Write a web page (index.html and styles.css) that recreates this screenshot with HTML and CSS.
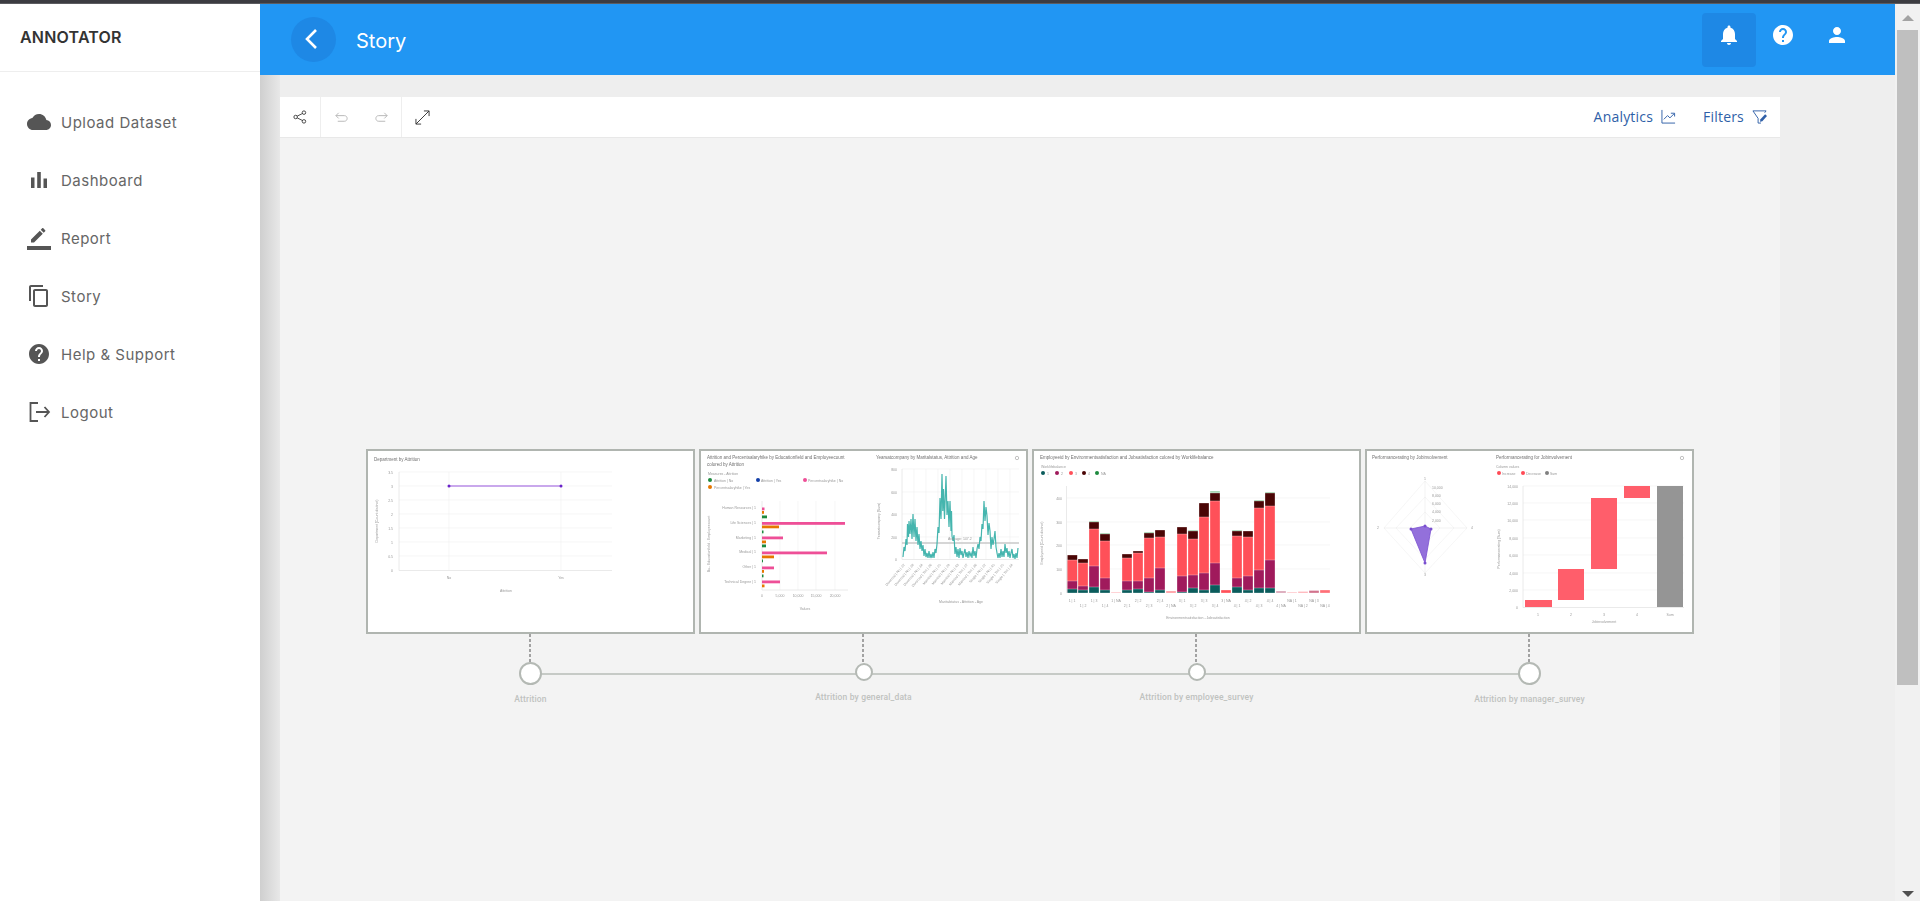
FILE: index.html
```html
<!DOCTYPE html>
<html>
<head>
<meta charset="utf-8">
<title>Annotator - Story</title>
<link rel="stylesheet" href="styles.css">
</head>
<body>
<div class="topstrip"></div>
<div class="app">
  <aside class="sidebar">
    <div class="brand">ANNOTATOR</div>
    <nav class="menu">
      <a class="menu-item"><svg viewBox="0 0 24 24"><path d="M19.35 10.04C18.67 6.59 15.64 4 12 4 9.11 4 6.6 5.64 5.35 8.04 2.34 8.36 0 10.91 0 14c0 3.31 2.69 6 6 6h13c2.76 0 5-2.24 5-5 0-2.64-2.05-4.78-4.65-4.96z"/></svg>Upload Dataset</a>
      <a class="menu-item"><svg viewBox="0 0 24 24"><path d="M4 9.500h3.500V20H4zM10.200 4h3.600v16h-3.600zM16.500 10.500H20V20h-3.500z"/></svg>Dashboard</a>
      <a class="menu-item"><svg viewBox="0 0 24 24"><path d="M0 20h24v4H0zM4 13.500v3h3l8.800-8.800-3-3zM18.200 5.300c.3-.3.3-.8 0-1.100l-1.900-1.900c-.3-.3-.8-.3-1.100 0l-1.500 1.500 3 3z"/></svg>Report</a>
      <a class="menu-item"><svg viewBox="0 0 24 24"><path d="M16 1H4c-1.100 0-2 .9-2 2v14h2V3h12V1zm3 4H8c-1.100 0-2 .9-2 2v14c0 1.100.9 2 2 2h11c1.100 0 2-.9 2-2V7c0-1.100-.9-2-2-2zm0 16H8V7h11v14z"/></svg>Story</a>
      <a class="menu-item"><svg viewBox="0 0 24 24"><path d="M12 2C6.480 2 2 6.480 2 12s4.480 10 10 10 10-4.480 10-10S17.520 2 12 2zm1 17h-2v-2h2v2zm2.070-7.750l-.9.920C13.450 12.900 13 13.500 13 15h-2v-.5c0-1.100.45-2.100 1.170-2.830l1.240-1.260c.37-.36.59-.86.59-1.410 0-1.100-.9-2-2-2s-2 .9-2 2H8c0-2.210 1.790-4 4-4s4 1.790 4 4c0 .88-.36 1.680-.93 2.250z"/></svg>Help &amp; Support</a>
      <a class="menu-item"><svg viewBox="0 0 24 24" class="stroke"><path d="M11 3H3.500v18H11M9 12h13M17.500 7l4.500 5-4.500 5"/></svg>Logout</a>
    </nav>
  </aside>

  <div class="main">
    <header class="topbar">
      <button class="back"><svg viewBox="0 0 24 24"><path d="M16 3L7 12l9 9"/></svg></button>
      <h1 class="page-title">Story</h1>
      <div class="top-icons">
        <span class="top-icon active"><svg viewBox="0 0 24 24"><path d="M12 22c1.100 0 2-.9 2-2h-4c0 1.100.9 2 2 2zm6-6v-5c0-3.070-1.630-5.640-4.500-6.320V4c0-.83-.67-1.500-1.500-1.500s-1.500.67-1.500 1.500v.68C7.640 5.360 6 7.920 6 11v5l-2 2v1h16v-1l-2-2z"/></svg></span>
        <span class="top-icon"><svg viewBox="0 0 24 24"><path d="M12 2C6.480 2 2 6.480 2 12s4.480 10 10 10 10-4.480 10-10S17.520 2 12 2zm1 17h-2v-2h2v2zm2.070-7.750l-.9.920C13.450 12.900 13 13.500 13 15h-2v-.5c0-1.100.45-2.100 1.170-2.830l1.240-1.260c.37-.36.59-.86.59-1.410 0-1.100-.9-2-2-2s-2 .9-2 2H8c0-2.210 1.790-4 4-4s4 1.790 4 4c0 .88-.36 1.680-.93 2.250z"/></svg></span>
        <span class="top-icon"><svg viewBox="0 0 24 24"><path d="M12 12c2.210 0 4-1.790 4-4s-1.790-4-4-4-4 1.790-4 4 1.790 4 4 4zm0 2c-2.670 0-8 1.340-8 4v2h16v-2c0-2.660-5.330-4-8-4z"/></svg></span>
      </div>
    </header>

    <section class="content">
      <div class="panel">
        <div class="toolbar">
          <span class="tool"><svg class="small" viewBox="0 0 16 16"><circle cx="3" cy="8" r="2"/><circle cx="12.500" cy="3" r="2"/><circle cx="12.500" cy="13" r="2"/><path d="M4.800 7l6-3M4.800 9l6 3"/></svg></span>
          <span class="tool wide">
            <svg class="faint" viewBox="0 0 16 16"><path d="M5 3L2 6l3 3M2 6h9c4 0 4 6 0 6H4"/></svg>
            <svg class="faint" viewBox="0 0 16 16"><path d="M11 3l3 3-3 3M14 6H5c-4 0-4 6 0 6h7"/></svg>
          </span>
          <span class="tool"><svg viewBox="0 0 16 16"><path d="M1 15L15 1M9.500 1H15v5.500M1 9.500V15h5.500"/></svg></span>
          <div class="toolbar-right">
            <a class="tool-link">Analytics <svg viewBox="0 0 16 16"><path d="M1 1v14h14M3 11l4-4 2.500 2.500L14 5M10.500 4.500H14.500V8"/></svg></a>
            <a class="tool-link">Filters <svg viewBox="0 0 16 16"><path d="M6.500 10L1 2h14l-1.500 2M6.500 10v5h3"/><path class="solid" d="M8.500 13.500l.5-2.500 5-5.500 2 2-5 5.500z"/></svg></a>
          </div>
        </div>

        <div class="canvas">
          <div class="story">

            <div class="step big first">
              <div class="card">
                <svg class="thumb" viewBox="0 0 325 181">
                  <text x="6" y="10" class="title">Department by Attrition</text>
                  <path class="grid" d="M31 21H244M31 35H244M31 49H244M31 63H244M31 77H244M31 91H244M31 105H244M81 21V119M193 21V119"/>
                  <path class="axis" d="M31 21V119.500H244"/>
                  <g class="tick">
                    <text x="25" y="22.500" text-anchor="end">3.5</text><text x="25" y="36.500" text-anchor="end">3</text>
                    <text x="25" y="50.500" text-anchor="end">2.5</text><text x="25" y="64.500" text-anchor="end">2</text>
                    <text x="25" y="78.500" text-anchor="end">1.5</text><text x="25" y="92.500" text-anchor="end">1</text>
                    <text x="25" y="106.500" text-anchor="end">0.5</text><text x="25" y="120.500" text-anchor="end">0</text>
                    <text x="81" y="128" text-anchor="middle">No</text><text x="193" y="128" text-anchor="middle">Yes</text>
                    <text x="138" y="141" text-anchor="middle">Attrition</text>
                    <text transform="translate(10,70) rotate(-90)" text-anchor="middle">Department (Count distinct)</text>
                  </g>
                  <path d="M81 35H193" stroke="#c9a8ec" stroke-width="2"/>
                  <circle cx="81" cy="35" r="1.500" fill="#6a22c9"/><circle cx="193" cy="35" r="1.500" fill="#6a22c9"/>
                </svg>
              </div>
              <div class="link"></div><div class="dot"></div>
              <div class="step-label">Attrition</div>
            </div>

            <div class="step">
              <div class="card">
                <svg class="thumb" viewBox="2 2 325 181">
                  <text x="8" y="10" class="title">Attrition and Percentsalaryhike by Educationfield and Employeecount</text>
                  <text x="8" y="17" class="title">colored by Attrition</text>
                  <text x="9" y="26" class="tick">Measures - Attrition</text>
                  <g class="tick">
                    <circle cx="11" cy="31" r="2" fill="#1d8a3e"/><text x="15" y="32.500">Attrition | No</text>
                    <circle cx="59" cy="31" r="2" fill="#123fa8"/><text x="62" y="32.500">Attrition | Yes</text>
                    <circle cx="106" cy="31" r="2" fill="#ee4f97"/><text x="109" y="32.500">Percentsalaryhike | No</text>
                    <circle cx="11" cy="38" r="2" fill="#e67700"/><text x="15" y="39.500">Percentsalaryhike | Yes</text>
                  </g>
                  <path class="grid" d="M81 52V141M99 52V141M117 52V141M136 52V141"/>
                  <path class="axis" d="M63 52V141H149"/>
                  <g class="tick">
                    <text x="57" y="59.500" text-anchor="end">Human Resources | 1</text><text x="57" y="74.500" text-anchor="end">Life Sciences | 1</text>
                    <text x="57" y="89.500" text-anchor="end">Marketing | 1</text><text x="57" y="103.500" text-anchor="end">Medical | 1</text>
                    <text x="57" y="118.500" text-anchor="end">Other | 1</text><text x="57" y="133.500" text-anchor="end">Technical Degree | 1</text>
                    <text x="63" y="147.500" text-anchor="middle">0</text><text x="81" y="147.500" text-anchor="middle">5,000</text>
                    <text x="99" y="147.500" text-anchor="middle">10,000</text><text x="117" y="147.500" text-anchor="middle">15,000</text>
                    <text x="136" y="147.500" text-anchor="middle">20,000</text><text x="106" y="160.500" text-anchor="middle">Values</text>
                    <text transform="translate(11,95) rotate(-90)" text-anchor="middle">Bu.. Educationfield - Employeecount</text>
                  </g>
                  <g fill="#ee4f97">
                    <rect x="63" y="58.500" width="2.500" height="2.800"/><rect x="63" y="73" width="83" height="2.800"/>
                    <rect x="63" y="87.500" width="21" height="2.800"/><rect x="63" y="102.500" width="65" height="2.800"/>
                    <rect x="63" y="117.500" width="12" height="2.800"/><rect x="63" y="131.500" width="18" height="2.800"/>
                  </g>
                  <g fill="#e67700">
                    <rect x="63" y="62" width="2" height="2.800"/><rect x="63" y="76.500" width="17" height="2.800"/>
                    <rect x="63" y="91.500" width="4" height="2.800"/><rect x="63" y="106.500" width="12" height="2.800"/>
                    <rect x="63" y="121" width="2" height="2.800"/><rect x="63" y="135.500" width="2.500" height="2.800"/>
                  </g>
                  <g fill="#1d8a3e">
                    <rect x="63" y="66.500" width="5" height="2.800"/><rect x="63" y="81.500" width="1.500" height="2.800"/>
                    <rect x="63" y="95.500" width="4" height="2.800"/><rect x="63" y="110.500" width="1" height="2.800"/><rect x="63" y="125.500" width="1.500" height="2.800"/>
                  </g>
                  <path class="grid" d="M203 20H320M203 43H320M203 65H320M203 88H320M215 20V110M227 20V110M239 20V110M251 20V110M263 20V110M275 20V110M287 20V110M299 20V110M311 20V110"/>
                  <path class="axis" d="M203 20V110.500H320"/>
                  <text x="177" y="10" class="title">Yearsatcompany by Maritalstatus, Attrition and Age</text>
                  <circle cx="318" cy="9" r="1.700" fill="none" stroke="#888" stroke-width=".5"/>
                  <path d="M203 94H320" stroke="#c8c8c8" stroke-width="1.500"/>
                  <path class="teal" d="M204 108L205 98 206 102 207 90 208 96 208.500 75 209.500 88 210 72 211 85 212 70 213 90 214 65 215 88 216 70 217 92 218 78 219 96 220 85 221 100 222 92 223 102 224 96 225 107 226 100 227 108 228 104 229 109 230 102 231 109 232 105 233 109 234 103 235 109 236 100 237 104 238 95 239 78 240 84 241 49 242 70 243 25 243.800 62 244.500 40 245.500 70 247 27 248 66 249 52 250 78 251 52 252 82 252.500 62 253 87 254 92 255 86 256 105 257 98 258 108 259 100 260 109 261 99 262 106 263 102 264 109 265 104 266 100 267 108 268 103 269 109 270 102 271 107 272 104 273 109 274 98 275 107 276 102 277 109 278 100 279 95 280 100 281 88 282 92 283 75 284 80 285 52 286 72 287 58 288 67 289 86 290 74 291 82 292 100 293 88 294 96 295 90 296 82 297 98 298 104 299 109 300 104 301 109 302 100 303 108 304 102 305 108 306 95 307 104 308 99 309 108 310 102 311 109 312 104 313 100 314 109 315 105 316 110 317 104 318 109 319 99"/>
                  <g class="tick">
                    <text x="198" y="21.500" text-anchor="end">800</text><text x="198" y="44.500" text-anchor="end">600</text>
                    <text x="198" y="66.500" text-anchor="end">400</text><text x="198" y="89.500" text-anchor="end">200</text><text x="198" y="111.500" text-anchor="end">0</text>
                    <text x="249" y="90.500">Average: 147.2</text>
                    <text x="262" y="153.500" text-anchor="middle">Maritalstatus - Attrition - Age</text>
                    <text transform="translate(181,72) rotate(-90)" text-anchor="middle">Yearsatcompany (Sum)</text>
                    <text transform="translate(206,116) rotate(-50)" text-anchor="end">Divorced | No | 22</text>
                    <text transform="translate(215,116) rotate(-50)" text-anchor="end">Divorced | No | 28</text>
                    <text transform="translate(224,116) rotate(-50)" text-anchor="end">Divorced | No | 34</text>
                    <text transform="translate(233,116) rotate(-50)" text-anchor="end">Divorced | Yes | 26</text>
                    <text transform="translate(242,116) rotate(-50)" text-anchor="end">Married | No | 20</text>
                    <text transform="translate(251,116) rotate(-50)" text-anchor="end">Married | No | 29</text>
                    <text transform="translate(260,116) rotate(-50)" text-anchor="end">Married | No | 43</text>
                    <text transform="translate(269,116) rotate(-50)" text-anchor="end">Married | Yes | 27</text>
                    <text transform="translate(278,116) rotate(-50)" text-anchor="end">Married | Yes | 36</text>
                    <text transform="translate(287,116) rotate(-50)" text-anchor="end">Single | No | 22</text>
                    <text transform="translate(296,116) rotate(-50)" text-anchor="end">Single | No | 40</text>
                    <text transform="translate(305,116) rotate(-50)" text-anchor="end">Single | Yes | 20</text>
                    <text transform="translate(314,116) rotate(-50)" text-anchor="end">Single | Yes | 34</text>
                  </g>
                </svg>
              </div>
              <div class="link"></div><div class="dot"></div>
              <div class="step-label">Attrition by general_data</div>
            </div>

            <div class="step">
              <div class="card">
                <svg class="thumb" viewBox="2 2 325 181">
                  <text x="8" y="10" class="title">Employeeid by Environmentsatisfaction and Jobsatisfaction colored by Worklifebalance</text>
                  <text x="9" y="19" class="tick">Worklifebalance</text>
                  <g class="tick">
                    <circle cx="11" cy="24" r="2" fill="#0b5c5c"/><text x="15" y="25.500">1</text>
                    <circle cx="25" cy="24" r="2" fill="#a01a5c"/><text x="29" y="25.500">2</text>
                    <circle cx="39" cy="24" r="2" fill="#ff5059"/><text x="43" y="25.500">3</text>
                    <circle cx="52" cy="24" r="2" fill="#4a0505"/><text x="56" y="25.500">4</text>
                    <circle cx="65" cy="24" r="2" fill="#1d8a3e"/><text x="69" y="25.500">NA</text>
                  </g>
                  <path class="grid" d="M35 49H298M35 73H298M35 96H298M35 120H298"/>
                  <path class="axis" d="M34.500 37V144"/>
                  <g class="tick">
                    <text x="30" y="50.500" text-anchor="end">400</text><text x="30" y="74.500" text-anchor="end">300</text>
                    <text x="30" y="97.500" text-anchor="end">200</text><text x="30" y="121.500" text-anchor="end">100</text><text x="30" y="145.500" text-anchor="end">0</text>
                    <text x="166" y="170" text-anchor="middle">Environmentsatisfaction - Jobsatisfaction</text>
                    <text transform="translate(11,94) rotate(-90)" text-anchor="middle">Employeeid (Count distinct)</text>
                  </g>
                  <g class="bars">
                    <rect x="35.300" y="106" width="10" height="38" fill="#4a0505"/><rect x="35.300" y="111" width="10" height="33" fill="#ff5059"/><rect x="35.300" y="132" width="10" height="12" fill="#a01a5c"/><rect x="35.300" y="140" width="10" height="4" fill="#0b5c5c"/>
                    <rect x="46" y="110" width="10" height="34" fill="#4a0505"/><rect x="46" y="114" width="10" height="30" fill="#ff5059"/><rect x="46" y="137" width="10" height="7" fill="#a01a5c"/><rect x="46" y="141" width="10" height="3" fill="#0b5c5c"/>
                    <rect x="57" y="72" width="10" height="1.500" fill="#9ccfa8"/><rect x="57" y="73" width="10" height="71" fill="#4a0505"/><rect x="57" y="80" width="10" height="64" fill="#ff5059"/><rect x="57" y="117" width="10" height="27" fill="#a01a5c"/><rect x="57" y="138" width="10" height="6" fill="#0b5c5c"/>
                    <rect x="68" y="84" width="10" height="1.500" fill="#9ccfa8"/><rect x="68" y="85" width="10" height="59" fill="#4a0505"/><rect x="68" y="92" width="10" height="52" fill="#ff5059"/><rect x="68" y="129" width="10" height="15" fill="#a01a5c"/><rect x="68" y="141" width="10" height="3" fill="#0b5c5c"/>
                    <rect x="79" y="143" width="10" height="1" fill="#ffc0c4"/>
                    <rect x="90" y="105" width="10" height="39" fill="#4a0505"/><rect x="90" y="109" width="10" height="35" fill="#ff5059"/><rect x="90" y="132" width="10" height="12" fill="#a01a5c"/><rect x="90" y="141" width="10" height="3" fill="#0b5c5c"/>
                    <rect x="101" y="102" width="10" height="42" fill="#4a0505"/><rect x="101" y="104" width="10" height="40" fill="#ff5059"/><rect x="101" y="132" width="10" height="12" fill="#a01a5c"/><rect x="101" y="140" width="10" height="4" fill="#0b5c5c"/>
                    <rect x="112" y="83" width="10" height="1.500" fill="#9ccfa8"/><rect x="112" y="84" width="10" height="60" fill="#4a0505"/><rect x="112" y="89" width="10" height="55" fill="#ff5059"/><rect x="112" y="129" width="10" height="15" fill="#a01a5c"/><rect x="112" y="143" width="10" height="1" fill="#0b5c5c"/>
                    <rect x="123" y="81" width="10" height="63" fill="#4a0505"/><rect x="123" y="88" width="10" height="56" fill="#ff5059"/><rect x="123" y="119" width="10" height="25" fill="#a01a5c"/><rect x="123" y="141" width="10" height="3" fill="#0b5c5c"/>
                    <rect x="134" y="142" width="10" height="2" fill="#ff9aa0"/>
                    <rect x="145" y="78" width="10" height="66" fill="#4a0505"/><rect x="145" y="85" width="10" height="59" fill="#ff5059"/><rect x="145" y="127" width="10" height="17" fill="#a01a5c"/><rect x="145" y="143" width="10" height="1" fill="#0b5c5c"/>
                    <rect x="156" y="81" width="10" height="1.500" fill="#9ccfa8"/><rect x="156" y="82" width="10" height="62" fill="#4a0505"/><rect x="156" y="90" width="10" height="54" fill="#ff5059"/><rect x="156" y="126" width="10" height="18" fill="#a01a5c"/><rect x="156" y="139" width="10" height="5" fill="#0b5c5c"/>
                    <rect x="167" y="54" width="10" height="90" fill="#4a0505"/><rect x="167" y="68" width="10" height="76" fill="#ff5059"/><rect x="167" y="124" width="10" height="20" fill="#a01a5c"/><rect x="167" y="141" width="10" height="3" fill="#0b5c5c"/>
                    <rect x="178" y="42" width="10" height="2" fill="#9ccfa8"/><rect x="178" y="44" width="10" height="100" fill="#4a0505"/><rect x="178" y="52" width="10" height="92" fill="#ff5059"/><rect x="178" y="114" width="10" height="30" fill="#a01a5c"/><rect x="178" y="136" width="10" height="8" fill="#0b5c5c"/>
                    <rect x="189" y="141" width="10" height="3" fill="#ff5059"/>
                    <rect x="200" y="81" width="10" height="1.500" fill="#9ccfa8"/><rect x="200" y="82" width="10" height="62" fill="#4a0505"/><rect x="200" y="87" width="10" height="57" fill="#ff5059"/><rect x="200" y="129" width="10" height="15" fill="#a01a5c"/><rect x="200" y="138" width="10" height="6" fill="#0b5c5c"/>
                    <rect x="211" y="82" width="10" height="62" fill="#4a0505"/><rect x="211" y="88" width="10" height="56" fill="#ff5059"/><rect x="211" y="127" width="10" height="17" fill="#a01a5c"/><rect x="211" y="141" width="10" height="3" fill="#0b5c5c"/>
                    <rect x="222" y="51" width="10" height="1.500" fill="#9ccfa8"/><rect x="222" y="52" width="10" height="92" fill="#4a0505"/><rect x="222" y="59" width="10" height="85" fill="#ff5059"/><rect x="222" y="121" width="10" height="23" fill="#a01a5c"/><rect x="222" y="139" width="10" height="5" fill="#0b5c5c"/>
                    <rect x="233" y="43" width="10" height="1.500" fill="#9ccfa8"/><rect x="233" y="44" width="10" height="100" fill="#4a0505"/><rect x="233" y="57" width="10" height="87" fill="#ff5059"/><rect x="233" y="111" width="10" height="33" fill="#a01a5c"/><rect x="233" y="139" width="10" height="5" fill="#0b5c5c"/>
                    <rect x="244" y="142" width="10" height="2" fill="#d9a3b5"/><rect x="255" y="143" width="10" height="1" fill="#ffc0c4"/><rect x="266" y="142.500" width="10" height="1.500" fill="#ffb0b5"/>
                    <rect x="277" y="141.500" width="10" height="2.500" fill="#d2738d"/><rect x="288" y="141" width="10" height="3" fill="#ff6f77"/>
                  </g>
                  <g class="tick" text-anchor="middle">
                    <text x="40" y="152.500">1 | 1</text><text x="51" y="157.500">1 | 2</text><text x="62" y="152.500">1 | 3</text><text x="73" y="157.500">1 | 4</text><text x="84" y="152.500">1 | NA</text>
                    <text x="95" y="157.500">2 | 1</text><text x="106" y="152.500">2 | 2</text><text x="117" y="157.500">2 | 3</text><text x="128" y="152.500">2 | 4</text><text x="139" y="157.500">2 | NA</text>
                    <text x="150" y="152.500">3 | 1</text><text x="161" y="157.500">3 | 2</text><text x="172" y="152.500">3 | 3</text><text x="183" y="157.500">3 | 4</text><text x="194" y="152.500">3 | NA</text>
                    <text x="205" y="157.500">4 | 1</text><text x="216" y="152.500">4 | 2</text><text x="227" y="157.500">4 | 3</text><text x="238" y="152.500">4 | 4</text><text x="249" y="157.500">4 | NA</text>
                    <text x="260" y="152.500">NA | 1</text><text x="271" y="157.500">NA | 2</text><text x="282" y="152.500">NA | 3</text><text x="293" y="157.500">NA | 4</text>
                  </g>
                </svg>
              </div>
              <div class="link"></div><div class="dot"></div>
              <div class="step-label">Attrition by employee_survey</div>
            </div>

            <div class="step big last">
              <div class="card">
                <svg class="thumb" viewBox="2 2 325 181">
                  <text x="7" y="10" class="title">Performancerating by Jobinvolvement</text>
                  <text x="131" y="10" class="title">Performancerating for Jobinvolvement</text>
                  <circle cx="317" cy="9" r="1.700" fill="none" stroke="#888" stroke-width=".5"/>
                  <path class="grid" d="M60 32L102 79 60 124 19 79zM60 48L89 79 60 110 31 79zM60 63L75 79 60 95 45 79z"/>
                  <path d="M60 32V124M19 79H102" stroke="#e0e0e0" stroke-width=".4"/>
                  <path d="M60 77L66 80 60 114 46 80z" fill="#9370db" stroke="#7a4fd0" stroke-width=".8"/>
                  <circle cx="60" cy="77" r="1.500" fill="#7a4fd0"/><circle cx="66" cy="80" r="1.500" fill="#7a4fd0"/><circle cx="60" cy="114" r="1.500" fill="#7a4fd0"/><circle cx="46" cy="80" r="1.500" fill="#7a4fd0"/>
                  <g class="tick">
                    <text x="67" y="40">10,000</text><text x="67" y="48">8,000</text><text x="67" y="56">6,000</text><text x="67" y="64">4,000</text><text x="67" y="73">2,000</text>
                    <text x="60" y="31" text-anchor="middle">1</text><text x="13" y="80" text-anchor="middle">2</text><text x="107" y="80" text-anchor="middle">4</text><text x="60" y="127" text-anchor="middle">3</text>
                    <text x="131" y="19">Column values</text>
                    <circle cx="134" cy="24" r="2" fill="#ff4a55"/><text x="137" y="25.500">Increase</text>
                    <circle cx="158" cy="24" r="2" fill="#ff4a55"/><text x="161" y="25.500">Decrease</text>
                    <circle cx="182" cy="24" r="2" fill="#808080"/><text x="185" y="25.500">Sum</text>
                  </g>
                  <path class="grid" d="M158 37H319M158 54H319M158 71H319M158 89H319M158 106H319M158 124H319M158 141H319"/>
                  <path class="axis" d="M158 37V158.500H319"/>
                  <g class="tick">
                    <text x="153" y="38.500" text-anchor="end">14,000</text><text x="153" y="55.500" text-anchor="end">12,000</text>
                    <text x="153" y="72.500" text-anchor="end">10,000</text><text x="153" y="90.500" text-anchor="end">8,000</text>
                    <text x="153" y="107.500" text-anchor="end">6,000</text><text x="153" y="125.500" text-anchor="end">4,000</text>
                    <text x="153" y="142.500" text-anchor="end">2,000</text><text x="153" y="159.500" text-anchor="end">0</text>
                    <text x="173" y="167" text-anchor="middle">1</text><text x="206" y="167" text-anchor="middle">2</text>
                    <text x="239" y="167" text-anchor="middle">3</text><text x="272" y="167" text-anchor="middle">4</text><text x="305" y="167" text-anchor="middle">Sum</text>
                    <text x="239" y="174" text-anchor="middle">Jobinvolvement</text>
                    <text transform="translate(135,100) rotate(-90)" text-anchor="middle">Performancerating (Sum)</text>
                  </g>
                  <rect x="160" y="151" width="27" height="7" fill="#ff5e6b"/>
                  <rect x="193" y="120" width="26" height="31" fill="#ff5e6b"/>
                  <rect x="226" y="49" width="26" height="71" fill="#ff5e6b"/>
                  <rect x="259" y="37" width="26" height="12" fill="#ff5e6b"/>
                  <rect x="292" y="37" width="26" height="121" fill="#959595"/>
                </svg>
              </div>
              <div class="link"></div><div class="dot"></div>
              <div class="step-label">Attrition by manager_survey</div>
            </div>

          </div>
        </div>
      </div>
    </section>
  </div>

  <div class="scrollbar">
    <span class="arrow up"></span>
    <div class="thumb-bar"></div>
    <span class="arrow down"></span>
  </div>
</div>
</body>
</html>
```

FILE: styles.css
```css
* { box-sizing: border-box; }

html, body {
  margin: 0;
  height: 100%;
  overflow: hidden;
  background: #eee;
  font-family: Inter, "Liberation Sans", sans-serif;
}

.topstrip { height: 4px; background: #3c3c41; border-bottom: 1px solid #5c5c60; }

.app { display: flex; height: 897px; }

/* sidebar */
.sidebar {
  width: 260px;
  flex: none;
  background: #fff;
}
.brand {
  height: 68px;
  padding: 22px 0 0 20px;
  font-size: 16px;
  font-weight: 600;
  letter-spacing: .2px;
  color: #333;
  border-bottom: 1px solid #eee;
  line-height: 22px;
}
.menu { display: flex; flex-direction: column; padding-top: 21px; }
.menu-item {
  height: 58px;
  display: flex;
  align-items: center;
  padding-left: 27px;
  font-size: 15px;
  letter-spacing: .5px;
  color: #666;
  gap: 10px;
}
.menu-item svg { width: 24px; height: 24px; fill: #555; flex: none; }
.menu-item svg.stroke { fill: none; stroke: #555; stroke-width: 1.800; }

/* blue bar */
.main { flex: 1; min-width: 0; display: flex; flex-direction: column; }
.topbar {
  height: 71px;
  flex: none;
  background: #2196f3;
  display: flex;
  align-items: center;
  padding-left: 31px;
  color: #fff;
}
.back {
  width: 45px;
  height: 45px;
  border: 0;
  padding: 0;
  border-radius: 50%;
  background: #1e88e5;
  display: flex;
  align-items: center;
  justify-content: center;
  margin-bottom: 1px;
}
.back svg { width: 24px; height: 24px; fill: none; stroke: #fff; stroke-width: 2.600; margin-left: -3px; }
.page-title { margin: 2px 0 0 20px; font-size: 20px; font-weight: 400; }
.top-icons { margin-left: auto; display: flex; align-self: flex-start; padding-top: 9px; margin-right: 31px; }
.top-icon {
  width: 54px;
  height: 54px;
  display: flex;
  justify-content: center;
  padding-top: 10px;
  border-radius: 4px;
}
.top-icon svg { width: 24px; height: 24px; fill: #fff; }
.top-icon.active { background: #1e88e5; }

/* story panel */
.content {
  flex: 1;
  min-height: 0;
  padding: 22px 115px 0 20px;
  overflow: hidden;
  background: linear-gradient(90deg, #cfcfcf, #e8e8e8) no-repeat 0 0 / 20px 100%;
}
.panel { height: 100%; display: flex; flex-direction: column; }
.toolbar {
  height: 41px;
  flex: none;
  display: flex;
  background: #fff;
  border-bottom: 1px solid #e8e8e8;
}
.tool {
  width: 41px;
  display: flex;
  align-items: center;
  justify-content: center;
  border-right: 1px solid #eee;
}
.tool.wide { width: 81px; justify-content: space-around; }
.tool + .tool:last-of-type { border-right: 0; }
.tool svg { width: 15px; height: 15px; fill: none; stroke: #333; stroke-width: 1; }
.tool svg.small { width: 14px; height: 14px; }
.tool svg.faint { stroke: #b5b5b5; }
.toolbar-right { margin-left: auto; display: flex; align-items: center; gap: 27px; padding: 0 13px 2px 0; }
.tool-link {
  display: flex;
  align-items: center;
  gap: 8px;
  font-family: "Open Sans", sans-serif;
  font-size: 14px;
  letter-spacing: .2px;
  color: #2f5fa8;
}
.tool-link svg { width: 15px; height: 15px; fill: none; stroke: #2f5fa8; stroke-width: 1; }
.tool-link svg .solid { fill: #2f5fa8; stroke: none; }

.canvas { flex: 1; background: #f3f3f3; padding-top: 311px; }
.story { display: flex; justify-content: center; gap: 4px; }

.step { width: 329px; display: flex; flex-direction: column; align-items: center; position: relative; }
.card { width: 100%; height: 185px; background: #fff; border: 2px solid #b0b5b0; filter: blur(.45px); }
.thumb { display: block; width: 100%; height: 100%; font-family: "Liberation Sans", sans-serif; }
.link {
  width: 2px;
  height: 31px;
  margin-left: -1px;
  background: repeating-linear-gradient(#a2a2a2 0 3px, transparent 3px 5px);
}
.dot {
  width: 18px;
  height: 18px;
  margin-top: -2px;
  border: 2px solid #b4b9b4;
  border-radius: 50%;
  background: #fff;
  position: relative;
  z-index: 1;
}
.step.big .dot { width: 23px; height: 23px; margin: -3px 0 -2px; }
.step::after {
  content: "";
  position: absolute;
  left: -2px;
  right: -2px;
  top: 224px;
  height: 2px;
  background: #c6cac6;
}
.step.first::after { left: 50%; }
.step.last::after { right: 50%; }
.step-label { margin-top: 11px; font-family: Roboto, sans-serif; font-size: 8.500px; font-weight: 500; letter-spacing: .15px; color: #bfc2bf; }
.step.big .step-label { margin-top: 11px; }

/* thumbnails */
.title { font-size: 4.500px; fill: #707070; }
.tick { font-size: 3.500px; fill: #999; }
.grid { fill: none; stroke: #f0f0f0; stroke-width: .6; }
.axis { fill: none; stroke: #e4e4e4; stroke-width: .8; }
.teal { fill: none; stroke: #45b5ae; stroke-width: 1.200; }
.bars rect { stroke: #fff; stroke-width: .3; }

/* window scrollbar */
.scrollbar {
  width: 25px;
  flex: none;
  background: #f1f1f1;
  display: flex;
  flex-direction: column;
  align-items: center;
}
.arrow { width: 0; height: 0; border-left: 6px solid transparent; border-right: 6px solid transparent; flex: none; }
.arrow.up { border-bottom: 6px solid #a3a3a3; margin: 11px 0 9px; }
.arrow.down { border-top: 6px solid #505050; margin: auto 0 4px; }
.thumb-bar { width: 21px; height: 655px; background: #bfbfbf; }
```
